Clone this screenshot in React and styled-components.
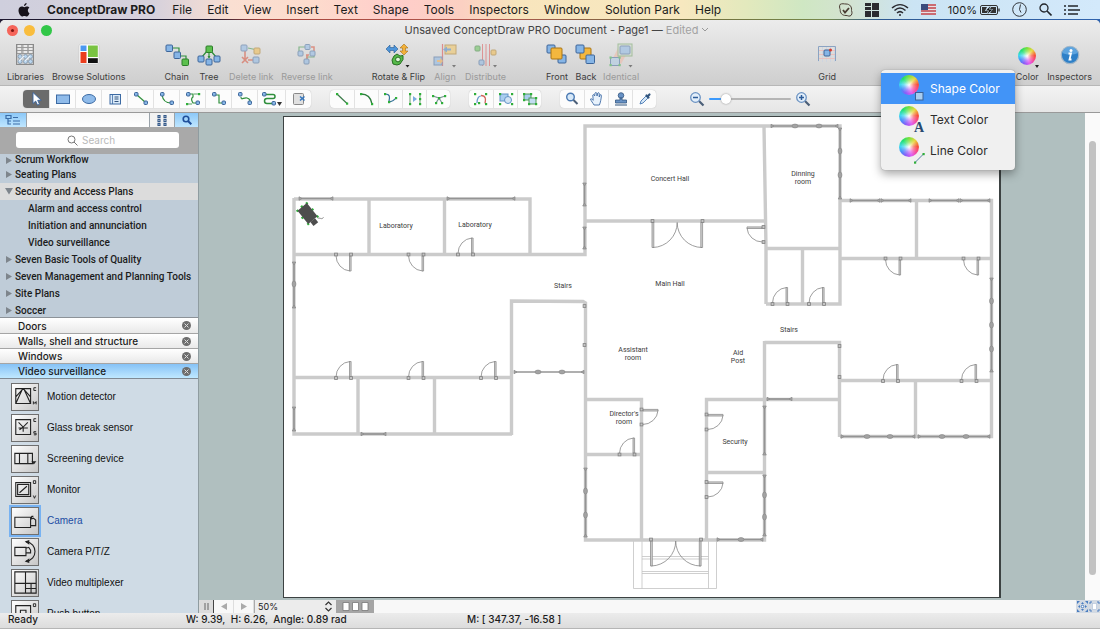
import React, { useState } from "react";
import styled, { createGlobalStyle, css } from "styled-components";

const GlobalStyle = createGlobalStyle`
  * {
    box-sizing: border-box;
  }

  body {
    margin: 0;
    font-family: Inter, "Liberation Sans", sans-serif;
    color: #1c1c1c;
  }

  button, input, select {
    font: inherit;
    color: inherit;
    margin: 0;
    padding: 0;
    border: 0;
    background: none;
  }

  svg {
    display: block;
    flex: none;
  }
`;

/* ---------------- Icon parts ---------------- */
const Node = ({ x, y, s = 6, fill = "#86b5e6", stroke = "#3c6599" }) => (
  <rect x={x} y={y} width={s} height={s} rx="1" fill={fill} stroke={stroke} strokeWidth="1" />
);

const Dot = ({ x, y }) => <rect x={x - 1} y={y - 1} width="2.2" height="2.2" fill="#2fae3a" />;

const GREEN = "#2f8f3c";
const GREEN_FILL = { fill: "#5cc04e", stroke: "#2c7d2a" };
const GOLD_FILL = { fill: "#f3b73e", stroke: "#a87415" };

const toolIcons = {
  libraries: (
    <>
      <rect x="3.5" y="1.5" width="17" height="20" fill="#c9c9c9" stroke="#8a8a8a" />
      <path d="M4 4.500h16M4 7.500h16M4 10.500h16M9 2v8.500M15 2v8.500" stroke="#999" strokeWidth="1" />
      <path d="M5 3h3M11 3h3M16 3h3M5 6h3M11 6h3M16 6h3M5 9h3M11 9h3M16 9h3" stroke="#f4f4f4" strokeWidth="1.300" />
      <g fill="#b9d5ee" stroke="#8397ab" strokeWidth=".8">
        <circle cx="7" cy="13.5" r="2" /><circle cx="12.5" cy="13.5" r="2" /><circle cx="17.5" cy="13.5" r="2" />
        <circle cx="7" cy="18.5" r="2" /><circle cx="12.5" cy="18.5" r="2" /><circle cx="17.5" cy="18.5" r="2" />
      </g>
      <path d="M6 18l5-5M12 18l5-5" stroke="#e9f3fb" strokeWidth="1.2" />
    </>
  ),
  solutions: (
    <>
      <rect x="2" y="1" width="20" height="20" rx="2" fill="#fff" stroke="#c4c4c4" strokeWidth=".6" />
      <rect x="3.5" y="2.5" width="6" height="5.5" fill="#4a97f0" />
      <rect x="11" y="2.5" width="9.8" height="11.5" fill="#79c342" />
      <rect x="3.5" y="9" width="6" height="11" fill="#ea3d1d" />
      <rect x="11" y="15.2" width="9.8" height="4.8" fill="#111" />
    </>
  ),
  chain: (
    <>
      <path d="M8 5h6v5M16 13h5v4" fill="none" stroke={GREEN} strokeWidth="1.2" />
      <Node x={1} y={2} s={6.5} /><Node x={9} y={9} s={6.5} /><Node x={17} y={16} s={6.5} {...GREEN_FILL} />
    </>
  ),
  tree: (
    <>
      <path d="M12 8v7M10 8l-5 6M14 8l5 6" fill="none" stroke={GREEN} strokeWidth="1.2" />
      <path d="M10.500 13h3L12 15.500z" fill={GREEN} />
      <Node x={9} y={3} s={6.5} {...GREEN_FILL} />
      <Node x={1} y={13} s={6} /><Node x={9} y={16} s={6} /><Node x={17} y={13} s={6} />
    </>
  ),
  deleteLink: (
    <>
      <path d="M9 5l7 1.500" stroke={GREEN} strokeWidth="1.2" />
      <path d="M6 8v8M9 17h8M3 14l6 6M9 14l-6 6" fill="none" stroke="#d8452b" strokeWidth="1.6" />
      <Node x={2} y={2} /><Node x={15} y={5} {...GOLD_FILL} /><Node x={14} y={14} />
    </>
  ),
  reverseLink: (
    <>
      <path d="M4 9V4h6M12 16v-2h7v-3" fill="none" stroke={GREEN} strokeWidth="1.2" />
      <path d="M16 4h3v4M12 12v4M14 12h-3" fill="none" stroke="#d8452b" strokeWidth="1.5" />
      <Node x={10} y={1.5} s={5} /><Node x={3} y={8} s={5} /><Node x={15} y={8} s={5} /><Node x={9} y={16} s={5} />
    </>
  ),
  rotate: (
    <>
      <path d="M0 6l4-4v2.500h4V2l4 4-4 4V7.500H4V10z" fill="#4e95da" stroke="#275a92" strokeWidth=".6" />
      <path d="M18 1l4 4h-2.500v3H22l-4 4-4-4h2.500V5H14z" fill="#f2b13a" stroke="#a5701a" strokeWidth=".6" />
      <path d="M8 13l3-2 3 2 3-.500v4l-3 4.500-3 1-4-1-1-4z" fill="#56ba4a" stroke="#256d20" />
      <circle cx="12" cy="16.5" r="2.4" fill="#dff3d9" stroke="#256d20" />
      <path d="M19.500 22h4l-2 2.500z" fill="#222" />
    </>
  ),
  align: (
    <>
      <path d="M9.500 1v22" stroke="#dc3d3d" strokeWidth="1.2" />
      <rect x="12" y="2" width="11" height="9" fill="#f3c356" stroke="#a87415" />
      <rect x="1" y="14" width="8" height="8" fill="#86b5e6" stroke="#3c6599" />
      <path d="M10 6.500l4-3v2h4v2h-4v2z" fill="#3f7ec3" />
      <path d="M10 18l-3-3v2H4v2h3v2z" fill="#f3a53e" />
      <path d="M19 22h4l-2 2.500z" fill="#222" />
    </>
  ),
  distribute: (
    <>
      <path d="M8.500 1v22M12 1v22M15.500 1v22" stroke="#dc3d3d" strokeWidth=".9" />
      <Node x={1} y={3} s={5} {...GREEN_FILL} /><Node x={17} y={7} s={5} {...GOLD_FILL} /><Node x={5} y={17} s={5} />
      <path d="M19 22h4l-2 2.500z" fill="#222" />
    </>
  ),
  front: (
    <>
      <Node x={2} y={2} s={8} /><Node x={13} y={12} s={8} /><Node x={6} y={5} s={11} {...GOLD_FILL} />
    </>
  ),
  back: (
    <>
      <Node x={6} y={5} s={11} {...GOLD_FILL} /><Node x={2} y={2} s={8} /><Node x={12} y={12} s={8.5} />
    </>
  ),
  identical: (
    <>
      <path d="M10 3l11 2-9 16-8-6z" fill="#f3b5a0" />
      <rect x="9" y="1" width="14" height="12" fill="#cfdccc" stroke="#6aa05c" />
      <rect x="11" y="3" width="10" height="8" rx="1" fill="#86b5e6" stroke="#3c6599" />
      <rect x="1.5" y="14.5" width="9" height="8" fill="#a9cbe8" stroke="#3c6599" />
      <Dot x={1.5} y={14.5} /><Dot x={10.5} y={14.5} /><Dot x={1.5} y={22} /><Dot x={10.5} y={22} />
      <path d="M19.500 22h4l-2 2.500z" fill="#222" />
    </>
  ),
  grid: (
    <>
      <path d="M3.500 4v15M7.500 4v15M11.500 4v15M15.500 4v15M19.500 4v15" stroke="#c9d3e2" strokeWidth=".7" />
      <path d="M3 7.500h17M3 11.500h17M3 15.500h17" stroke="#eebab6" strokeWidth=".8" />
      <path d="M3.500 18V3.500h17V18" fill="none" stroke="#8ba3c2" />
      <Node x={9} y={7} s={6} />
      <circle cx="15.5" cy="7" r="1.5" fill="#d63a2c" />
    </>
  ),
  inspectors: (
    <>
      <circle cx="12" cy="12" r="8.7" fill="#2e80c8" stroke="#a3b7c8" strokeWidth="1.2" />
      <path d="M4.500 10a7.600 7.600 0 0 1 15 0c-4 2-10 2-15 0z" fill="#72b4e8" opacity=".7" />
      <circle cx="13" cy="7.5" r="1.5" fill="#fff" />
      <path d="M10.500 10.500h2.500l-1.500 6h2" fill="none" stroke="#fff" strokeWidth="1.8" />
    </>
  ),
};

const connector = (d) => (
  <>
    <path d={d} fill="none" stroke={GREEN} strokeWidth="1.2" />
    <Node x={1.5} y={1.5} s={3.5} /><Node x={11} y={10} s={3.5} />
  </>
);

const stripIcons = {
  pointer: <path d="M5 1.500v11l2.700-2.400 1.800 4 2-.900-1.800-3.900h3.500z" fill="#fff" stroke="#3563a0" strokeWidth=".9" />,
  rect: <rect x="1.5" y="4" width="13" height="8.5" fill="#8fbbea" stroke="#3c6aa3" />,
  ellipse: <ellipse cx="8" cy="8" rx="6.5" ry="4.5" fill="#8fbbea" stroke="#3c6aa3" />,
  text: (
    <>
      <rect x="3" y="3.5" width="10.5" height="9.5" fill="#dcebf9" stroke="#3c6aa3" />
      <path d="M5.500 3.500v9.500" stroke="#3c6aa3" strokeWidth=".8" />
      <path d="M7.500 6h4M7.500 8h4M7.500 10.500h4" stroke="#33547d" />
    </>
  ),
  direct: connector("M4 4l8 7"),
  arc: connector("M3 4c1 6 4 8 9 8"),
  smart: (
    <>
      {connector("M4 3h4v3c-3 2-1 4 0 6h3")}
      <Dot x={14} y={3} /><Dot x={2} y={13} /><path d="M9 3h4M3 13h4" stroke={GREEN} strokeWidth=".8" />
    </>
  ),
  elbow: connector("M4 4h4v8h4"),
  bezier: connector("M4 6c0 4 3 0 6 1s3 2 3 4"),
  round: (
    <>
      <path d="M4 3.500h8a2 2 0 0 1 0 4H6a2.500 2.500 0 0 0 0 5h6" fill="none" stroke={GREEN} strokeWidth="1.5" />
      <Node x={1.5} y={1.5} s={3.5} /><Node x={11} y={10.5} s={3.5} />
    </>
  ),
  shapeExit: (
    <>
      <rect x="2.5" y="2.5" width="10" height="11" rx="1" fill="#e0e0e0" stroke="#888" />
      <path d="M9 5.500l4.500 4M13.500 5.500l-4.500 4" stroke="#3576bd" strokeWidth="1.5" />
    </>
  ),
  line: <><path d="M3 3l10 9.500" stroke="#3a7b48" strokeWidth="1.2" /><Dot x={3} y={3} /><Dot x={13} y={12.5} /></>,
  curve: <><path d="M2 3c7 0 10 4 11 10" fill="none" stroke="#2d7d3d" strokeWidth="1.5" /><Dot x={2} y={3} /><Dot x={13} y={13} /></>,
  spline: <><path d="M2 3c5 0 5 3 4 7 3 2 5-1 7-3" fill="none" stroke="#39759a" strokeWidth="1.2" /><Dot x={2} y={3} /><Dot x={6} y={11} /><Dot x={13} y={7} /></>,
  mirror: (
    <>
      <path d="M3 3v10M13 3v10" stroke="#67a16b" />
      <path d="M6 5v6l4-3z" fill="#7aabdf" />
      <Dot x={3} y={3} /><Dot x={3} y={13} /><Dot x={13} y={3} /><Dot x={13} y={8} /><Dot x={13} y={13} />
    </>
  ),
  cut: (
    <>
      <path d="M2 5l6 2 6-2M8 7l-3 5M8 7l3 5" fill="none" stroke="#7f9a98" strokeWidth="1.3" />
      <Dot x={2} y={5} /><Dot x={14} y={5} /><Dot x={5} y={12} /><Dot x={11} y={12} /><Dot x={8} y={7} />
    </>
  ),
  path: (
    <>
      <path d="M8 4.500c5 0 5 4 4 8" fill="none" stroke="#d0655c" strokeWidth="1.3" />
      <path d="M4 12c0-5 2-7 4-7" fill="none" stroke="#6899cb" strokeWidth="1.2" />
      <Dot x={2} y={3} /><Dot x={13} y={3} /><Dot x={2} y={13} /><Dot x={13} y={13} /><Dot x={6} y={12} />
    </>
  ),
  group: (
    <>
      <rect x="2" y="3" width="8" height="7" fill="#a9cdef" stroke="#6294c6" /><circle cx="10" cy="9" r="3.5" fill="#d1e3f4" stroke="#6294c6" />
      <Dot x={2} y={3} /><Dot x={14} y={3} /><Dot x={2} y={13} /><Dot x={14} y={13} />
    </>
  ),
  ungroup: (
    <>
      <rect x="2" y="3" width="7" height="6" fill="#a9cdef" stroke="#4f9a58" /><rect x="7" y="7" width="7" height="6" fill="#c2dcf2" stroke="#4f9a58" />
      <Dot x={2} y={3} /><Dot x={9} y={3} /><Dot x={2} y={9} /><Dot x={14} y={7} /><Dot x={7} y={13} /><Dot x={14} y={13} />
    </>
  ),
  magnifier: (
    <>
      <circle cx="6.5" cy="6" r="3.8" fill="#d6e8f8" stroke="#4a79b3" strokeWidth="1.4" />
      <path d="M9.500 9l4 4" stroke="#4b5f78" strokeWidth="2" />
    </>
  ),
  hand: (
    <path
      d="M5 14c-1-2-3-4-3.500-6 1-.700 2 .500 2.700 1.300L3.800 4c.800-.900 1.600-.200 1.800 1L6 2c.700-.900 1.500-.600 1.700.300L8 5l.800-3c.800-.700 1.500-.300 1.500.700L10.200 6l1-2.200c.800-.400 1.300 0 1.200.900-.200 3-1 7-2 9.300z"
      fill="#e8f2fc" stroke="#3f6ca6" strokeWidth=".9"
    />
  ),
  stamp: (
    <>
      <circle cx="8" cy="4.5" r="2.8" fill="#6892c5" stroke="#33567f" strokeWidth=".8" />
      <path d="M7 7h2v2h4.500v3h-11V9H7z" fill="#6892c5" stroke="#33567f" strokeWidth=".8" />
      <path d="M2 14h12" stroke="#33567f" strokeWidth="1.2" />
    </>
  ),
  dropper: (
    <>
      <path d="M3 13l1-3 5-5 2 2-5 5z" fill="#d6e8f8" stroke="#4a79b3" strokeWidth=".9" />
      <path d="M9.500 4.500l2 2M10.500 5.500l2-2" stroke="#33567f" strokeWidth="2.2" strokeLinecap="round" />
    </>
  ),
};

const ZoomGlass = ({ plus }) => (
  <svg width="16" height="16" viewBox="0 0 16 16">
    <path d="M10 10l4.500 4.500" stroke="#4b5f78" strokeWidth="2.2" />
    <circle cx="6.5" cy="6.5" r="4.8" fill="#e2eefa" stroke="#6c93c2" strokeWidth="1.3" />
    <path d={plus ? "M4 6.500h5M6.500 4v5" : "M4 6.500h5"} stroke="#2e5d99" strokeWidth="1.5" />
  </svg>
);

/* ---------------- Data ---------------- */
const menus = ["File", "Edit", "View", "Insert", "Text", "Shape", "Tools", "Inspectors", "Window", "Solution Park", "Help"];

const toolGroups = [
  [["libraries", "Libraries"], ["solutions", "Browse Solutions"]],
  [["chain", "Chain"], ["tree", "Tree"], ["deleteLink", "Delete link", 1], ["reverseLink", "Reverse link", 1]],
  [["rotate", "Rotate & Flip"], ["align", "Align", 1], ["distribute", "Distribute", 1]],
  [["front", "Front", 0, 5], ["back", "Back", 0, 5], ["identical", "Identical", 1]],
];

const stripGroups = [
  { size: 26, tools: ["pointer", "rect", "ellipse", "text", "direct", "arc", "smart", "elbow", "bezier", "round", "shapeExit"] },
  { size: 24, tools: ["line", "curve", "spline", "mirror", "cut"] },
  { size: 24, tools: ["path", "group", "ungroup"] },
  { size: 24, tools: ["magnifier", "hand", "stamp", "dropper"] },
];

const treeRows = [
  { label: "Scrum Workflow" },
  { label: "Seating Plans" },
  { label: "Security and Access Plans", open: true },
  { label: "Alarm and access control", child: true },
  { label: "Initiation and annunciation", child: true },
  { label: "Video surveillance", child: true },
  { label: "Seven Basic Tools of Quality" },
  { label: "Seven Management and Planning Tools" },
  { label: "Site Plans" },
  { label: "Soccer" },
];

const openLibraries = ["Doors", "Walls, shell and structure", "Windows", "Video surveillance"];

const shapes = [
  { name: "Motion detector", art: <><path d="M3 5h16v16H3zM3 21L10 6h2l7 15M3 14l7-8M19 14l-7-8" /><path d="M25 4h-2.500v3H25M22 22v-3l1.500 2 1.500-2v3" strokeWidth="1" /></> },
  { name: "Glass break sensor", art: <><path d="M3 5h16v16H3zM6 8l5 5 5-5M11 13v5M6 14h10M11 13l-4 3" /><path d="M25 4h-2.500v3H25M25 18h-2.500v1.700H25v1.700h-2.500" strokeWidth="1" /></> },
  { name: "Screening device", art: <path d="M2 8h19v11H2zM7 8v11M16 8v11M21 17h3l-1.500 2z" /> },
  { name: "Monitor", art: <><path d="M3 6h16v15H3zM5 8h12v11H5zM7 17l8-7" /><path d="M22 4h2.500v3H22zM22 20l1.200 3 1.300-3" strokeWidth="1" /></> },
  { name: "Camera", art: <path d="M2 10h17v11H2zM19 12l3-1 2.500 2v6H19M20 9h2M20 9v3" /> },
  { name: "Camera P/T/Z", art: <><path d="M2 9h12v9H2zM14 10l3-1 2 3v3h-5M14 3c13 1 13 20 0 21" /><path d="M17 2l-3 1 3 2zM17 22l-3 2 3 1z" fill="#222" /></> },
  { name: "Video multiplexer", art: <path d="M2 2h23v23H2zM13.500 2v23M2 14.500h23M19.500 14.500V25M13.500 20H25" /> },
  { name: "Push button", art: <><path d="M3 5h16v16H3zM8 10h6v6H8z" /><path d="M22 3h2.500v3H22z" strokeWidth="1" /></> },
];

/* ---------------- Floor plan ---------------- */
const walls = `M294 199H530V254.500M294 198V434H512M369 199V254M444.500 199V254M294 254.500H585V126H840V304H766
  M764 126L766 248V304M585 221H766M766 248.500H840M802.500 249V304
  M840 200.500H991.500V436.500H840M916.500 201V258M840 258.500H991M840 258V304
  M840 380.500H991M764.500 342.500H839.500V437M915.500 381V436M764.500 341V540H585.500V303L583 301.500L511.500 301V435
  M294 377.500H511M358 378V434M434.500 378V434
  M585 399.500H641.500V540M585 454.500H641M706.500 540V399.500H840M707 472.500H764`;

// x1, y1, x2, y2, then the offsets of the mullions along the run
const windows = [
  [299, 198.5, 333, 198.5], [447, 198.5, 515, 198.5],
  [294, 262, 294, 308, 22], [294, 407, 294, 431], [361, 434, 386, 434],
  [584.5, 183, 584.5, 206], [584.5, 227, 584.5, 249],
  [514, 372, 584, 372, 24, 48], [771, 126, 838, 126, 24, 48], [840, 128, 840, 199, 23, 47],
  [850, 200.5, 880, 200.5], [881, 200.5, 911, 200.5], [929, 200.5, 959, 200.5], [960, 200.5, 990, 200.5],
  [991.5, 278, 991.5, 372, 23, 47, 71],
  [841, 436.5, 915, 436.5, 26, 49], [918, 436.5, 990, 436.5, 24, 48],
  [767, 399, 792, 399], [764.5, 406, 764.5, 455], [764.5, 475, 764.5, 536, 20, 42],
  [585.5, 468, 585.5, 537, 23, 47], [717, 539.5, 763, 539.5, 24],
];

const posts = [[584.5, 306], [584.5, 345], [839.5, 346], [839.5, 377]];

const swings = { down: "", up: "scale(1 -1)", right: "rotate(-90)", left: "rotate(90) scale(-1 1)" };

const doors = [
  [336, 254.5, "down"], [408.5, 254.5, "down"], [885.5, 258.5, "down"], [963.5, 258.5, "down"],
  [458, 254.5, "up"], [336, 378, "up"], [408.5, 378, "up"], [481, 378, "up"], [883, 381, "up"], [961.5, 381, "up"],
  [619.5, 454.5, "up"], [772.5, 304, "up"], [809, 304, "up"],
  [641.5, 424.5, "right"], [706.5, 429.5, "right"], [706.5, 497, "right"], [763.5, 242, "left"],
];

const rooms = [
  [670, 181, "Concert Hall"], [803, 176, "Dinning", "room"], [396, 228, "Laboratory"], [475, 227, "Laboratory"],
  [563, 288, "Stairs"], [670, 286, "Main Hall"], [789, 332, "Stairs"], [633, 352, "Assistant", "room"],
  [738, 355, "Aid", "Post"], [624, 416, "Director's", "room"], [735, 444, "Security"],
];

const WindowRun = ({ run }) => {
  const [x1, y1, x2, y2, ...mullions] = run;
  const vertical = x1 === x2;
  const length = vertical ? y2 - y1 : x2 - x1;
  return (
    <g transform={`translate(${x1} ${y1})${vertical ? " rotate(90)" : ""}`} fill="#a3a3a3" stroke="#8a8a8a" strokeWidth=".7">
      <path d={`M0 0H${length}`} stroke="#949494" strokeWidth="1.700" />
      <path d={`M0-1.800L3 0L0 1.800zM${length}-1.800L${length - 3} 0L${length} 1.800z`} />
      {mullions.map((m) => <ellipse key={m} cx={m} cy="0" rx="3" ry="1.900" />)}
    </g>
  );
};

const Post = ({ x, y }) => <rect x={x - 1.4} y={y - 1.4} width="2.8" height="2.8" fill="#c4c4c4" stroke="#808080" strokeWidth=".8" />;

const Door = ({ x, y, swing }) => (
  <g transform={`translate(${x} ${y}) ${swings[swing]}`}>
    <path d="M13.500 1.500h1.600V16.500h-1.600z" fill="#d2d2d2" stroke="#8e8e8e" strokeWidth=".8" />
    <path d="M0 1A15 15.500 0 0 0 14 16.500" fill="none" stroke="#858585" strokeWidth=".8" />
    <Post x={0} y={0} /><Post x={15} y={0} />
  </g>
);

const DoubleDoor = ({ x, y }) => (
  <g transform={`translate(${x} ${y})`}>
    <path d="M0 1.500h1.800V26.500H0zM48.800 1.500h1.800V26.500h-1.800z" fill="#d2d2d2" stroke="#8e8e8e" strokeWidth=".8" />
    <path d="M1 26.500A25 25 0 0 0 25.200 1.500A25 25 0 0 0 50 26.500" fill="none" stroke="#858585" strokeWidth=".8" />
    <Post x={0.5} y={0} /><Post x={50.5} y={0} />
  </g>
);

const FloorPlan = () => (
  <PlanDrawing viewBox="284 117 715 480">
    <g fill="none" stroke="#c3c3c3" strokeWidth=".8">
      <path d="M633.500 541V588.500H716.500V541M642 541V588.500M708.500 541V588.500M642 556.500H708.500M642 559H708.500M642 571.500H708.500M642 573.500H708.500" />
    </g>
    <path d={walls} fill="none" stroke="#cbcbcb" strokeWidth="3.400" />
    {windows.map((run, i) => <WindowRun key={i} run={run} />)}
    {posts.map(([x, y]) => <Post key={y} x={x} y={y} />)}
    {doors.map(([x, y, swing]) => <Door key={`${x}-${y}`} x={x} y={y} swing={swing} />)}
    <DoubleDoor x={652} y={221} />
    <DoubleDoor x={650.5} y={539.5} />
    {rooms.map(([x, y, ...lines]) =>
      lines.map((line, i) => <text key={x + line} x={x} y={y + i * 8}>{line}</text>)
    )}
    <g transform="translate(307.500 213.500) rotate(51)">
      <Dot x={-8.5} y={-6} /><Dot x={-8.5} y={6} /><Dot x={8.5} y={-6} /><Dot x={8.5} y={6} />
      <Dot x={0} y={-6.5} /><Dot x={0} y={6.5} /><Dot x={-9} y={0} />
      <rect x="-8.5" y="-6" width="17" height="12" fill="#4d4d4d" />
      <rect x="8.5" y="-2.8" width="5" height="6" fill="#4d4d4d" />
      <path d="M10-5c2-3 4-2 3-5" fill="none" stroke="#777" strokeWidth=".8" />
    </g>
  </PlanDrawing>
);

/* ---------------- App ---------------- */
const App = () => {
  const [tool, setTool] = useState("pointer");
  const [shape, setShape] = useState("Camera");
  const [library, setLibrary] = useState("Video surveillance");
  const [target, setTarget] = useState("Shape Color");

  return (
    <Desktop>
      <GlobalStyle />
      <MenuBar>
        <svg width="12" height="14" viewBox="0 0 12 14">
          <path
            d="M8.600 0C8.700 1.600 7.400 3 6 3 5.900 1.500 7.200.200 8.600 0zM11.500 10.200C10.900 11.800 9.900 13.500 8.700 13.500 7.800 13.500 7.500 13 6.400 13S4.900 13.500 4.100 13.500C2.400 13.500.500 10.400.500 7.600.500 5 2.100 3.600 3.800 3.600 4.800 3.600 5.600 4.200 6.300 4.200S8 3.500 9.100 3.500C10 3.500 10.900 4 11.400 4.800 9.200 6.100 9.500 9.200 11.500 10.200z"
            fill="#17131a"
          />
        </svg>
        <AppName>ConceptDraw PRO</AppName>
        {menus.map((name) => <MenuButton key={name}>{name}</MenuButton>)}
        <StatusIcons>
          <svg width="14" height="14" viewBox="0 0 14 14" fill="none" stroke="#4a3d33" strokeWidth="1">
            <path d="M1 1.500C3 .200 5 1 7 1c4 0 6 3 5.500 6.500 1 2 .500 5-1.500 5.500-2 .300-2-.500-4-.500C3 12.500 1 10 1.200 6.500.500 5 .300 3 1 1.500z" />
            <path d="M4 7l2 2.500L10 5" strokeWidth="1.8" />
          </svg>
          <svg width="14" height="14" viewBox="0 0 14 14" fill="#2b2b30">
            <path d="M0 0h6v3H0zM0 4h6v3H0zM0 8h6v6H0zM7 0h7v7H7zM7 8h7v6H7z" />
          </svg>
          <svg width="18" height="14" viewBox="0 0 18 14" fill="none" stroke="#2b2b30" strokeWidth="1.5">
            <path d="M1 5c5-4.500 11-4.500 16 0M3.500 7.500c3.500-3.200 7.500-3.200 11 0M6 10c2-1.800 4-1.800 6 0" />
            <circle cx="9" cy="12" r="1" fill="#2b2b30" stroke="none" />
          </svg>
          <svg width="15" height="11" viewBox="0 0 15 11">
            <rect width="15" height="11" fill="#e8e2e6" />
            <path d="M0 1h15M0 4h15M0 7h15M0 10h15" stroke="#c0444c" strokeWidth="1.4" />
            <rect width="7" height="6" fill="#3a4a7c" />
          </svg>
          <Battery>
            100%
            <svg width="20" height="10" viewBox="0 0 20 10">
              <rect x=".5" y=".5" width="17" height="9" rx="1.5" fill="none" stroke="#333" />
              <path d="M2 2h5L5 6h3l-1 2H2zM11 2h5v6h-6l3-4h-3z" fill="#333" />
              <path d="M10.500 1L6 5.500h3L7.500 9l5-4.500H9z" fill="#111" />
              <path d="M19 3.500v3" stroke="#333" strokeWidth="1.4" />
            </svg>
          </Battery>
          <svg width="15" height="15" viewBox="0 0 15 15" fill="none" stroke="#33373c">
            <circle cx="7.5" cy="7.5" r="6.8" />
            <path d="M8.500 2.500L7.500 7.500l1.500 3" />
          </svg>
          <svg width="13" height="13" viewBox="0 0 13 13" fill="none" stroke="#23262b" strokeWidth="1.3">
            <circle cx="5" cy="5" r="4" />
            <path d="M8 8l4.500 4.500" strokeWidth="1.6" />
          </svg>
          <svg width="16" height="10" viewBox="0 0 16 10" stroke="#23262b" strokeWidth="1.4">
            <path d="M0 1h2M0 5h2M0 9h2M4 1h10M4 5h12M4 9h10" />
          </svg>
        </StatusIcons>
      </MenuBar>

      <AppWindow>
        <Header>
          <TitleBar>
            <Lights>
              <Light $color="#f5655a" aria-label="Close"><LightMark /></Light>
              <Light $color="#f9bd3d" aria-label="Minimize" />
              <Light $color="#32c748" aria-label="Zoom window" />
            </Lights>
            <Title>Unsaved ConceptDraw PRO Document - Page1 — <span>Edited</span></Title>
            <svg width="8" height="6" viewBox="0 0 8 6" fill="none" stroke="#999"><path d="M1 1l3 3 3-3" /></svg>
          </TitleBar>
          <Toolbar>
            {toolGroups.map((group, i) => (
              <ToolGroup key={i}>
                {group.map(([icon, label, off, space]) => (
                  <ToolButton key={icon} disabled={!!off} $space={space}>
                    <svg width="24" height="25" viewBox="0 0 24 25">{toolIcons[icon]}</svg>
                    {label}
                  </ToolButton>
                ))}
              </ToolGroup>
            ))}
            <ToolButton $push>
              <svg width="24" height="25" viewBox="0 0 24 25">{toolIcons.grid}</svg>
              Grid
            </ToolButton>
            <ToolGroup>
              <ToolButton>
                <WheelSlot>
                  <Wheel $size={18} />
                  <svg width="4" height="3" viewBox="0 0 4 3"><path d="M0 0h4L2 3z" fill="#222" /></svg>
                </WheelSlot>
                Color
              </ToolButton>
              <ToolButton>
                <svg width="24" height="25" viewBox="0 0 24 25">{toolIcons.inspectors}</svg>
                Inspectors
              </ToolButton>
            </ToolGroup>
          </Toolbar>
        </Header>

        <Strip>
          {stripGroups.map((group) => (
            <Segment key={group.tools[0]}>
              {group.tools.map((name) => (
                <SegmentButton key={name} aria-label={name} $size={group.size} $active={tool === name} onClick={() => setTool(name)}>
                  <svg width="16" height="16" viewBox="0 0 16 16">{stripIcons[name]}</svg>
                  {name === "round" && <svg width="5" height="16" viewBox="0 0 5 16"><path d="M0 11h5l-2.500 4z" fill="#333" /></svg>}
                </SegmentButton>
              ))}
            </Segment>
          ))}
          <ZoomControl>
            <button aria-label="Zoom out"><ZoomGlass /></button>
            <ZoomSlider type="range" aria-label="Zoom" defaultValue="16" />
            <button aria-label="Zoom in"><ZoomGlass plus /></button>
          </ZoomControl>
        </Strip>

        <Body>
          <Sidebar>
            <PanelTabs>
              <PanelTab $on $width={26} aria-label="Tree view">
                <svg width="16" height="11" viewBox="0 0 16 11" fill="none" stroke="#3a6da8">
                  <path d="M1 .500h5v3H1zM3 4v5h3M3 6h3M8 2.500h5M8 6h7M8 9h7" strokeWidth="1.2" />
                </svg>
              </PanelTab>
              <PanelTabFill />
              <PanelTab $width={25} aria-label="Icon view">
                <svg width="10" height="11" viewBox="0 0 10 11" fill="none" stroke="#34598a" strokeWidth="1.1">
                  <path d="M1 .600h2v2H1zM7 .600h2v2H7zM1 4.500h2v2H1zM7 4.500h2v2H7zM1 8.400h2v2H1zM7 8.400h2v2H7z" />
                </svg>
              </PanelTab>
              <PanelTab $on $width={24} aria-label="Search">
                <svg width="10" height="10" viewBox="0 0 10 10" fill="none" stroke="#1f4f9b">
                  <circle cx="4" cy="4" r="2.8" strokeWidth="1.6" /><path d="M6 6l3.300 3.300" strokeWidth="2" />
                </svg>
              </PanelTab>
            </PanelTabs>
            <SearchArea>
              <SearchField>
                <svg width="11" height="11" viewBox="0 0 11 11" fill="none" stroke="#777"><circle cx="4.5" cy="4.5" r="3.5" /><path d="M7 7l3.500 3.500" /></svg>
                <input type="search" placeholder="Search" aria-label="Search" />
              </SearchField>
            </SearchArea>
            <Tree>
              {treeRows.map((row) => (
                <TreeRow key={row.label} $open={row.open} $child={row.child}>
                  {!row.child && (
                    <svg width="9" height="7" viewBox="0 0 9 7" fill="#7e858c">
                      <path d={row.open ? "M0 0h8L4 6.500z" : "M1 0l6 3.500L1 7z"} />
                    </svg>
                  )}
                  {row.label}
                </TreeRow>
              ))}
            </Tree>
            <LibraryList>
              {openLibraries.map((name) => (
                <LibraryRow key={name} $on={library === name}>
                  <button onClick={() => setLibrary(name)}>{name}</button>
                  <button aria-label={`Close ${name}`}>
                    <svg width="9" height="9" viewBox="0 0 9 9"><circle cx="4.5" cy="4.5" r="4.5" fill="#6d6d6d" /><path d="M2.500 2.500l4 4M6.500 2.500l-4 4" stroke="#ddd" /></svg>
                  </button>
                </LibraryRow>
              ))}
            </LibraryList>
            <ShapeList>
              {shapes.map(({ name, art }) => (
                <ShapeRow key={name} $on={shape === name} onClick={() => setShape(name)}>
                  <ShapeThumb $on={shape === name}>
                    <svg width="25" height="25" viewBox="0 0 27 27" fill="none" stroke="#222" strokeWidth="1.2">{art}</svg>
                  </ShapeThumb>
                  {name}
                </ShapeRow>
              ))}
            </ShapeList>
          </Sidebar>

          <Workspace>
            <CanvasRow>
              <Canvas><Paper><FloorPlan /></Paper></Canvas>
              <ScrollTrack><ScrollThumb /></ScrollTrack>
            </CanvasRow>
            <PageBar>
              <PauseButton aria-label="Split">
                <svg width="5" height="7" viewBox="0 0 5 7"><path d="M1 0v7M4 0v7" stroke="#666" /></svg>
              </PauseButton>
              <PageButton aria-label="Previous page"><svg width="6" height="7" viewBox="0 0 6 7"><path d="M6 0v7L0 3.500z" fill="#aaa" /></svg></PageButton>
              <PageButton aria-label="Next page"><svg width="6" height="7" viewBox="0 0 6 7"><path d="M0 0v7l6-3.500z" fill="#aaa" /></svg></PageButton>
              <ZoomSelect>
                <select aria-label="Zoom level" defaultValue="50%">
                  <option>25%</option>
                  <option>50%</option>
                  <option>100%</option>
                </select>
                <svg width="7" height="11" viewBox="0 0 7 11" fill="none" stroke="#333" strokeWidth="1.2"><path d="M.500 4l3-3 3 3M.500 7l3 3 3-3" /></svg>
              </ZoomSelect>
              <PageTabs aria-label="Pages">
                <svg width="27" height="9" viewBox="0 0 27 9"><path d="M1 .500h6v8H1zM10.500.500h6v8h-6zM20 .500h6v8h-6z" fill="#fff" stroke="#777" strokeWidth=".8" /></svg>
              </PageTabs>
              <FitButtons>
                <FitButton aria-label="Fit page">
                  <svg width="11" height="11" viewBox="0 0 11 11" fill="#4a7dc0"><path d="M0 0h3L0 3zM11 0v3L8 0zM0 11V8l3 3zM11 11H8l3-3zM5.500 1L7 3H4zM5.500 10L4 8h3zM1 5.500L3 4v3zM10 5.500L8 7V4z" /><circle cx="5.5" cy="5.5" r="1.3" fill="#fff" stroke="#4a7dc0" /></svg>
                </FitButton>
                <FitButton aria-label="Actual size">
                  <svg width="11" height="11" viewBox="0 0 11 11"><path d="M1 3V1h2M8 1h2v2M1 8v2h2M8 10h2V8" fill="none" stroke="#4a7dc0" /><rect x="3.5" y="2.5" width="4" height="6" fill="#fff" stroke="#b5c5dc" strokeWidth=".7" /></svg>
                </FitButton>
              </FitButtons>
            </PageBar>
          </Workspace>
        </Body>

        <StatusBar>
          <span>Ready</span>
          <span>W: 9.39,&nbsp; H: 6.26,&nbsp; Angle: 0.89 rad</span>
          <span>M: [ 347.37, -16.58 ]</span>
        </StatusBar>
      </AppWindow>

      <ColorMenu>
        {["Shape Color", "Text Color", "Line Color"].map((name) => (
          <ColorItem key={name} $on={target === name} onMouseEnter={() => setTarget(name)}>
            <ColorGlyph>
              <Wheel $size={20} />
              <Badge width="12" height="12" viewBox="0 0 12 12">
                {name === "Shape Color" && <rect x="2.5" y="2.5" width="7.5" height="7.5" fill="#a9cdf0" stroke="#3a6297" />}
                {name === "Text Color" && <text x="6" y="11" textAnchor="middle">A</text>}
                {name === "Line Color" && <><path d="M2 10.500L10.500 2" stroke="#5b83a8" /><Dot x={2} y={10.5} /><Dot x={10.5} y={2} /></>}
              </Badge>
            </ColorGlyph>
            {name}
          </ColorItem>
        ))}
      </ColorMenu>
    </Desktop>
  );
};

export default App;

/* ---------------- Styled Components ---------------- */
const Desktop = styled.div`
  position: relative;
  display: flex;
  flex-direction: column;
  min-height: 100vh;
  background: linear-gradient(90deg, #1e1830 0 19%, #a8453c 24%, #b0574e 45%, #70683c 60%, #76894a 75%, #2f5a92 80%, #2f63ad);
`;

const MenuBar = styled.header`
  display: flex;
  align-items: center;
  gap: 15px;
  height: 19px;
  margin-bottom: 1px;
  padding: 0 20px 0 18px;
  background: linear-gradient(90deg, #cfcfdd 0, #d6d1dc 14%, #fadfd2 21%, #fddccd 28%, #ffcdca 36%, #fbd0c2 42%, #f8e5bd 47%, #f7e8bf 62%, #e2e9bd 68%, #cfe7c3 73%, #d3e3d0 77%, #cbe4f4 83%, #d3e9fb);
  font-size: 12px;
`;

const AppName = styled.strong`
  margin: 0 2px;
  font-weight: 700;
`;

const MenuButton = styled.button`
  white-space: nowrap;
`;

const StatusIcons = styled.div`
  display: flex;
  align-items: center;
  gap: 12px;
  margin-left: auto;
`;

const Battery = styled.span`
  display: flex;
  align-items: center;
  gap: 3px;
  font-size: 11px;
`;

const AppWindow = styled.main`
  flex: 1;
  display: flex;
  flex-direction: column;
  overflow: hidden;
  border-radius: 5px 5px 0 0;
  background: #ececec;
`;

const Header = styled.div`
  background: linear-gradient(#ececec, #cecece);
  border-bottom: 1px solid #b7b7b7;
`;

const TitleBar = styled.div`
  position: relative;
  display: flex;
  align-items: center;
  justify-content: center;
  gap: 3px;
  height: 20px;
  padding-left: 14px;
`;

const Lights = styled.div`
  position: absolute;
  left: 7px;
  display: flex;
  gap: 6px;
`;

const Light = styled.button`
  display: grid;
  place-items: center;
  width: 11px;
  height: 11px;
  border-radius: 50%;
  background: ${({ $color }) => $color};
`;

const LightMark = styled.i`
  width: 3px;
  height: 3px;
  border-radius: 50%;
  background: #7c1510;
`;

const Title = styled.h1`
  margin: 0;
  font-size: 11px;
  font-weight: 400;
  color: #444;

  span {
    color: #a2a2a2;
  }
`;

const Toolbar = styled.div`
  display: flex;
  height: 45px;
  padding: 3px 8px 0 7px;
`;

const ToolGroup = styled.div`
  display: flex;

  & + & {
    margin-left: 39px;
  }
`;

const ToolButton = styled.button`
  display: flex;
  flex-direction: column;
  align-items: center;
  gap: 3px;
  margin-right: ${({ $space = 8 }) => $space}px;
  font-size: 9px;
  line-height: 12px;
  white-space: nowrap;
  color: #3d3d3d;

  ${({ $push }) => $push && css`
    margin: 0 auto;
  `}

  &:last-child {
    margin-right: 0;
  }

  &:disabled {
    color: #9a9a9a;
  }

  &:disabled svg {
    opacity: 0.5;
  }
`;

const WheelSlot = styled.span`
  position: relative;
  display: grid;
  place-items: center;
  width: 24px;
  height: 25px;

  svg {
    position: absolute;
    right: 0;
    bottom: 0;
  }
`;

const Wheel = styled.span`
  display: block;
  width: ${({ $size }) => $size}px;
  height: ${({ $size }) => $size}px;
  border-radius: 50%;
  background:
    radial-gradient(circle, #fff 0, rgba(255, 255, 255, 0.3) 35%, rgba(255, 255, 255, 0) 60%),
    conic-gradient(#7be03c, #e8d840 12%, #f8503c 24%, #f84a90 34%, #e05cf0 45%, #8b5cf8 56%, #4a8cfb 66%, #3fd8f0 76%, #20e070 88%, #7be03c);
`;

const Strip = styled.div`
  display: flex;
  align-items: center;
  gap: 19px;
  height: 27px;
  padding-left: 23px;
  border-bottom: 1px solid #999;
  background: linear-gradient(#f3f3f3, #e6e6e6);
`;

const Segment = styled.div`
  display: flex;
  height: 18px;
  border-radius: 4px;
  overflow: hidden;
  background: #fcfcfc;
  box-shadow: 0 0 1px #aaa;
`;

const SegmentButton = styled.button`
  display: flex;
  align-items: center;
  justify-content: center;
  min-width: ${({ $size }) => $size}px;
  padding: 0 3px;
  background: ${({ $active }) => ($active ? "#6b6b6b" : "none")};

  & + & {
    border-left: 1px solid #e2e2e2;
  }
`;

const ZoomControl = styled.div`
  display: flex;
  align-items: center;
  gap: 4px;
  margin-left: 14px;
`;

const ZoomSlider = styled.input`
  appearance: none;
  width: 82px;
  height: 10px;

  &::-webkit-slider-runnable-track {
    height: 2px;
    border-radius: 1px;
    background: linear-gradient(90deg, #3b99fc 16%, #b5b5b5 16%);
  }

  &::-webkit-slider-thumb {
    appearance: none;
    width: 10px;
    height: 10px;
    margin-top: -4px;
    border-radius: 50%;
    background: #fff;
    box-shadow: 0 0 2px #888;
  }
`;

const Body = styled.div`
  flex: 1;
  display: flex;
  min-height: 0;
`;

const Sidebar = styled.aside`
  display: flex;
  flex-direction: column;
  width: 199px;
  flex: none;
  border-right: 1px solid #8f9ca0;
  background: #cfdbe5;
`;

const PanelTabs = styled.div`
  display: flex;
  height: 14px;
`;

const PanelTab = styled.button`
  display: grid;
  place-items: center;
  width: ${({ $width }) => $width}px;
  border-left: 1px solid #9aa3aa;
  background: ${({ $on }) => ($on ? "linear-gradient(#8cc8f8, #bfe6ff)" : "#f2f2f2")};

  &:first-child {
    border-left: 0;
  }
`;

const PanelTabFill = styled.div`
  flex: 1;
  background: linear-gradient(#f6f6f6, #fff);
  border-left: 1px solid #9aa3aa;
`;

const SearchArea = styled.div`
  padding: 5px 19px 6px 16px;
  background: #a9a9a9;
`;

const SearchField = styled.label`
  display: flex;
  align-items: center;
  justify-content: center;
  gap: 4px;
  height: 16px;
  border-radius: 3px;
  background: #fff;
  font-size: 10px;

  input {
    width: 46px;
    outline: 0;
  }

  input::placeholder {
    color: #b9b9b9;
  }
`;

const Tree = styled.ul`
  margin: 0;
  padding: 0;
  height: 163px;
  overflow: hidden;
  list-style: none;
  background: #bfccd8;
  font-family: Roboto, "Liberation Sans", sans-serif;
  font-size: 10px;
  line-height: 12px;
  font-weight: 500;

  li:first-child {
    height: 12px;
  }
`;

const TreeRow = styled.li`
  display: flex;
  align-items: center;
  gap: 1px;
  height: 17px;
  padding-left: ${({ $child }) => ($child ? 28 : 5)}px;
  white-space: nowrap;
  background: ${({ $open }) => ($open ? "#dcdcdc" : "none")};
`;

const LibraryList = styled.div`
  border-top: 1px solid #8c9298;
  border-bottom: 1px solid #7f8a94;
`;

const LibraryRow = styled.div`
  display: flex;
  align-items: center;
  justify-content: space-between;
  height: 15px;
  padding: 0 7px 0 18px;
  font-size: 10px;
  font-weight: 500;
  background: ${({ $on }) => ($on ? "linear-gradient(#86c2f6, #bfe8ff)" : "linear-gradient(#ffffff, #e9e9e9)")};

  & + & {
    border-top: 1px solid #a5a5a5;
  }
`;

const ShapeList = styled.div`
  flex: 1 0 0;
  min-height: 0;
  overflow: hidden;
  padding-top: 2px;
`;

const ShapeRow = styled.button`
  display: flex;
  align-items: center;
  gap: 8px;
  width: 100%;
  height: 31px;
  padding-left: 11px;
  font-family: "Liberation Sans", Arial, sans-serif;
  font-size: 10px;
  color: ${({ $on }) => ($on ? "#1d4da3" : "#111")};
`;

const ShapeThumb = styled.span`
  display: grid;
  place-items: center;
  width: 28px;
  height: 28px;
  border: 1px solid #6f6f6f;
  background: linear-gradient(135deg, #fff, #c6c6c6);
  box-shadow: ${({ $on }) => ($on ? "0 0 0 2px #77b2f2" : "none")};
`;

const Workspace = styled.section`
  flex: 1;
  display: flex;
  flex-direction: column;
  min-width: 0;
`;

const CanvasRow = styled.div`
  flex: 1;
  display: flex;
`;

const Canvas = styled.div`
  flex: 1;
  min-width: 0;
  padding: 3px 84px 2px;
  background: #b0bfbf;
`;

const Paper = styled.div`
  border: 1px solid #3c4242;
  border-right-width: 2px;
  background: #fff;
`;

const PlanDrawing = styled.svg`
  width: 100%;
  font-family: Roboto, "Liberation Sans", sans-serif;
  font-size: 7px;
  fill: #3c3c3c;
  text-anchor: middle;
`;

const ScrollTrack = styled.div`
  display: flex;
  justify-content: center;
  width: 15px;
  padding: 28px 0 25px;
  background: #fafafa;
`;

const ScrollThumb = styled.div`
  width: 7px;
  border-radius: 4px;
  background: #c1c1c1;
`;

const PageBar = styled.div`
  display: flex;
  height: 13px;
  background: #f8f8f8;
  font-size: 9px;
`;

const PauseButton = styled.button`
  display: grid;
  place-items: center;
  width: 15px;
  border-right: 1px solid #444;
  background: #dcdcdc;
`;

const PageButton = styled.button`
  display: grid;
  place-items: center;
  width: 20px;
  border-right: 1px solid #ddd;
`;

const ZoomSelect = styled.div`
  position: relative;

  select {
    appearance: none;
    width: 82px;
    height: 13px;
    padding-left: 3px;
    border-left: 1px solid #aaa;
    background: #ececec;
  }

  svg {
    position: absolute;
    top: 1px;
    right: 4px;
    pointer-events: none;
  }
`;

const PageTabs = styled.button`
  display: grid;
  place-items: center;
  width: 38px;
  background: #a5a5a5;
`;

const FitButtons = styled.div`
  display: flex;
  margin-left: auto;
`;

const FitButton = styled.button`
  display: grid;
  place-items: center;
  width: 12px;
  background: #d3dae3;
`;

const StatusBar = styled.footer`
  display: grid;
  grid-template-columns: 178px 281px 1fr;
  height: 16px;
  padding: 0 8px;
  border-bottom: 1px solid #b5b5b5;
  background: linear-gradient(#ececec, #dcdcdc);
  font-size: 10px;
  line-height: 13px;
  font-weight: 500;
`;

const ColorMenu = styled.div`
  position: absolute;
  top: 70px;
  right: 85px;
  width: 134px;
  padding: 3px 0 4px;
  border-radius: 4px;
  background: #f0f0f0;
  box-shadow: 0 0 1px #777, 0 4px 10px rgba(0, 0, 0, 0.35);
`;

const ColorItem = styled.button`
  display: flex;
  align-items: center;
  gap: 5px;
  width: 100%;
  height: 31px;
  padding-left: 18px;
  font-size: 12px;
  background: ${({ $on }) => ($on ? "#4294f7" : "none")};
  color: ${({ $on }) => ($on ? "#fff" : "#2c2c2c")};
`;

const ColorGlyph = styled.span`
  position: relative;
  width: 26px;
  height: 27px;
`;

const Badge = styled.svg`
  position: absolute;
  right: 0;
  bottom: 0;
  overflow: visible;
  font-family: "Liberation Serif", serif;
  font-size: 14px;
  font-weight: 700;
  fill: #27496f;
`;
